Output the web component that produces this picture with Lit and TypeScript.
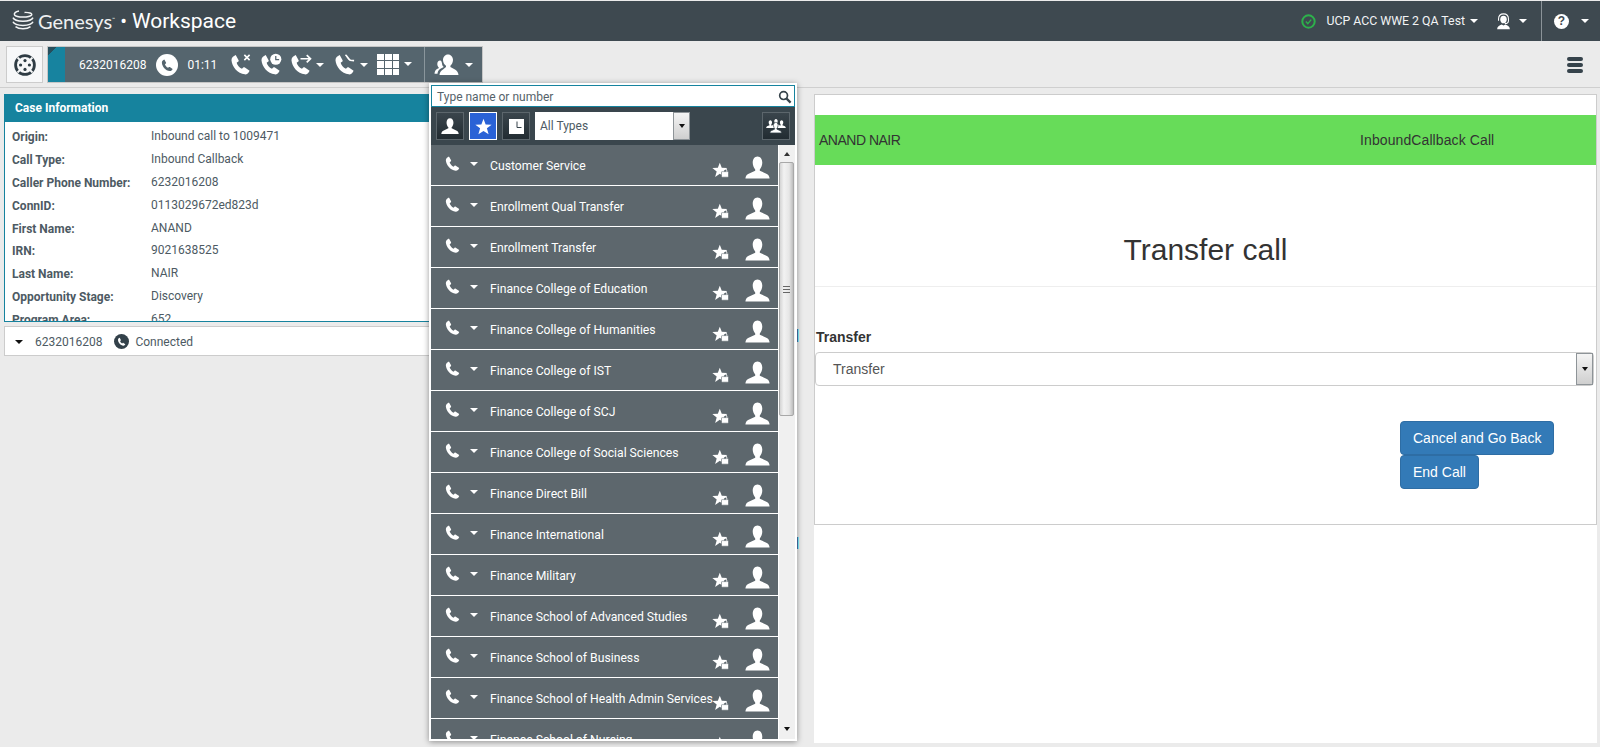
import { LitElement, css, html, svg } from "lit";
import { customElement } from "lit/decorators.js";

const HANDSET =
  "M7 2 L10 7.5 C10.3 8.2 10 8.8 9 9.5 L8 10.2 C8.6 12.6 10.8 15.4 13.5 16.5 L14.6 15.4 C15.3 14.8 16 14.8 16.6 15.2 L21.5 18.5 C20.5 21 18.5 22.5 16.5 22.3 C9 21.5 3 14 2.6 7.5 C2.5 5 4.5 3 7 2Z";
const PERSON =
  "M12 1.5 C14.9 1.5 16.6 4.2 16.6 7.5 C16.6 10.4 15.2 12.6 14.2 13.8 L14.2 15 L21 18.2 C22.6 19 23.4 20.6 23.6 22.6 L0.4 22.6 C0.6 20.6 1.4 19 3 18.2 L9.8 15 L9.8 13.8 C8.8 12.6 7.4 10.4 7.4 7.5 C7.4 4.2 9.1 1.5 12 1.5Z";
const STAR =
  "M12 1 L15 9 L23.5 9.4 L16.8 14.6 L19.2 23 L12 18.2 L4.8 23 L7.2 14.6 L0.5 9.4 L9 9Z";

const phone = (size: number, extra = svg``) => html`<svg
  class="ico"
  width=${size}
  height=${size}
  viewBox="0 0 24 24"
  fill="#fff"
>
  <path d=${HANDSET}></path>${extra}
</svg>`;

const person = (size: number) => html`<svg
  class="ico"
  width=${size}
  height=${size}
  viewBox="0 0 24 24"
  fill="#fff"
>
  <path d=${PERSON}></path>
</svg>`;

const phoneDisc = (size: number, bg: string, fg: string) => html`<svg
  class="ico"
  width=${size}
  height=${size}
  viewBox="0 0 24 24"
>
  <circle cx="12" cy="12" r="12" fill=${bg}></circle>
  <path d=${HANDSET} fill=${fg} transform="translate(4.8 4.8) scale(.62)"></path>
</svg>`;

const favLock = html`<svg class="ico" width="17" height="16" viewBox="0 0 17 16">
  <path d=${STAR} fill="#fff" transform="scale(.65)"></path>
  <rect x="9.5" y="9.6" width="7" height="5.6" rx=".6" fill="#fff" stroke="#5d676d" stroke-width=".6"></rect>
  <path d="M11.2 9.6 V8.6 a1.8 1.8 0 0 1 3.6 0 V9.6" fill="none" stroke="#fff" stroke-width="1"></path>
</svg>`;

const caret = (cls = "") => html`<i class="caret ${cls}"></i>`;

const CASE_ROWS = [
  ["Origin:", "Inbound call to 1009471"],
  ["Call Type:", "Inbound Callback"],
  ["Caller Phone Number:", "6232016208"],
  ["ConnID:", "0113029672ed823d"],
  ["First Name:", "ANAND"],
  ["IRN:", "9021638525"],
  ["Last Name:", "NAIR"],
  ["Opportunity Stage:", "Discovery"],
  ["Program Area:", "652"],
];

const TARGETS = [
  "Customer Service",
  "Enrollment Qual Transfer",
  "Enrollment Transfer",
  "Finance College of Education",
  "Finance College of Humanities",
  "Finance College of IST",
  "Finance College of SCJ",
  "Finance College of Social Sciences",
  "Finance Direct Bill",
  "Finance International",
  "Finance Military",
  "Finance School of Advanced Studies",
  "Finance School of Business",
  "Finance School of Health Admin Services",
  "Finance School of Nursing",
];

@customElement("app-root")
export class AppRoot extends LitElement {
  private _topbar() {
    return html`
      <header class="topbar">
        <svg class="logo" width="22" height="20" viewBox="0 0 22 20" fill="none" stroke="#f2f4f5" stroke-width="1.5">
          <path d="M7 1 C3.5 1.6 1.6 3.4 2.6 5 C4.5 7.8 17.5 7.8 19.6 5 C20.6 3.4 17 2.2 12.5 2.4"></path>
          <path d="M1 7.6 C3 12.4 19 12.4 21 7.6"></path>
          <path d="M1 11.8 C3 16.6 19 16.6 21 11.8"></path>
          <path d="M3.5 16.6 C7 19.4 15 19.4 18.5 16.6"></path>
        </svg>
        <span class="genesys">Genesys</span><sup class="tm">™</sup>
        <span class="bullet">•</span>
        <span class="workspace">Workspace</span>
        <span class="spring"></span>
        <svg class="ico" width="15" height="15" viewBox="0 0 15 15" fill="none">
          <circle cx="7.5" cy="7.5" r="6.2" stroke="#2db14b" stroke-width="2"></circle>
          <path d="M4.8 7.6 L6.8 9.6 L10.2 5.6" stroke="#2db14b" stroke-width="1.4"></path>
        </svg>
        <span class="user">UCP ACC WWE 2 QA Test</span>
        ${caret("user-caret")}
        <svg class="ico agent" width="17" height="17" viewBox="0 0 24 24" fill="#fff">
          <path d="M12 4 C15.2 4 16.6 6.4 16.6 9 C16.6 12 14.8 14.6 12 14.6 C9.2 14.6 7.4 12 7.4 9 C7.4 6.4 8.8 4 12 4Z"></path>
          <path d="M3 23 C3 19 6 17.5 9.5 16.2 L12 17.6 L14.5 16.2 C18 17.5 21 19 21 23Z"></path>
          <path d="M5 11 V8.5 C5 4 8 1.2 12 1.2 C16 1.2 19 4 19 8.5 V11 M19 11 C19 14 17 15 14 15" fill="none" stroke="#fff" stroke-width="1.5"></path>
        </svg>
        ${caret("agent-caret")}
        <span class="top-divider"></span>
        <span class="help">?</span>
        ${caret("help-caret")}
      </header>
    `;
  }

  private _toolbar() {
    return html`
      <div class="toolbar">
        <button class="dial">
          <svg width="24" height="24" viewBox="0 0 24 24" fill="none">
            <circle cx="12" cy="12" r="9.4" stroke="#2f3c44" stroke-width="2.8"></circle>
            <path d="M4.5 4.5 L8 8 M19.5 4.5 L16 8 M4.5 19.5 L8 16 M19.5 19.5 L16 16" stroke="#f7f8f9" stroke-width="1.8"></path>
            <circle cx="12" cy="7.6" r="1.6" fill="#2f3c44"></circle>
            <circle cx="12" cy="16.4" r="1.6" fill="#2f3c44"></circle>
            <circle cx="7.6" cy="12" r="1.6" fill="#2f3c44"></circle>
            <circle cx="16.4" cy="12" r="1.6" fill="#2f3c44"></circle>
          </svg>
        </button>
        <div class="callbar">
          <div class="stripe"></div>
          <span class="call-num">6232016208</span>
          ${phoneDisc(22, "#fff", "#55656e")}
          <span class="call-time">01:11</span>
          <span class="call-ico first">
            ${phone(23, svg`<path d="M16 2 L21.5 7.5 M21.5 2 L16 7.5" stroke="#fff" stroke-width="1.7"></path>`)}
          </span>
          <span class="call-ico">
            ${phone(23, svg`<circle cx="17.5" cy="6.5" r="5.8"></circle><path d="M17.5 3 V6.8 H21" fill="none" stroke="#55656e" stroke-width="1.3"></path>`)}
          </span>
          <span class="call-ico">
            ${phone(23, svg`<path d="M12 6 H22 M18.5 2.2 L22.4 6 L18.5 9.8" fill="none" stroke="#fff" stroke-width="1.8"></path>`)}
            ${caret("bar-caret")}
          </span>
          <span class="call-ico wide">
            ${phone(23, svg`<path d="M13 2 C15 3.4 15.5 6 18 7.6 L22 8" fill="none" stroke="#fff" stroke-width="1.8"></path>`)}
            ${caret("bar-caret")}
          </span>
          <span class="call-ico wide">
            <span class="grid-ico">${Array.from({ length: 9 }, () => html`<b></b>`)}</span>
            ${caret("bar-caret grid-caret")}
          </span>
          <span class="bar-divider"></span>
          <span class="agents">
            <svg class="ico" width="25" height="24" viewBox="0 0 25 24" fill="#fff">
              <path d="M14 1.5 C17 1.5 19 4 19 7 C19 9.6 17.6 11.6 16.4 12.8 L16.4 14 L21 16.4 C23 17.4 24.3 19.6 24.5 22 L5.5 22 C5.7 19.6 7 17.4 9 16.4 L12 14 L12 12.8 C10.4 11.6 9 9.6 9 7 C9 4 11 1.5 14 1.5Z"></path>
              <path d="M6 7.5 C7.5 7.5 7.8 9 8 10.5 C8.2 12 8.5 13 9.8 14 L6 16 C4.5 17 3.6 19 3.5 20.8 L.5 20.8 C.6 18.6 1.6 16.8 3 16 L5 15 C3.6 13.4 3 11.8 3.4 10 C3.7 8.5 4.6 7.5 6 7.5Z"></path>
            </svg>
            ${caret("bar-caret agents-caret")}
          </span>
        </div>
        <span class="spring"></span>
        <span class="burger"><b></b><b></b><b></b></span>
      </div>
    `;
  }

  private _casePanel() {
    return html`
      <section class="left">
        <div class="case">
          <div class="case-title">Case Information</div>
          <div class="case-body">
            ${CASE_ROWS.map(
              ([k, v]) => html`<div class="case-row"><span class="key">${k}</span><span>${v}</span></div>`
            )}
          </div>
        </div>
        <div class="party">
          <i class="caret dark"></i>
          <span class="party-num">6232016208</span>
          ${phoneDisc(15, "#33414a", "#fff")}
          <span class="party-state">Connected</span>
        </div>
      </section>
    `;
  }

  private _form() {
    return html`
      <section class="right">
        <div class="frame">
          <div class="banner">
            <span class="b-name">ANAND NAIR</span>
            <span class="b-type">InboundCallback Call</span>
          </div>
          <h2>Transfer call</h2>
          <hr />
          <label>Transfer</label>
          <div class="select">
            <span>Transfer</span>
            <span class="sel-btn"><i class="caret dark small"></i></span>
          </div>
          <div class="actions">
            <button class="btn">Cancel and Go Back</button>
            <button class="btn">End Call</button>
          </div>
        </div>
      </section>
    `;
  }

  private _popup() {
    return html`
      <div class="popup">
        <div class="search">
          <span>Type name or number</span>
          <svg width="14" height="14" viewBox="0 0 14 14" fill="none" stroke="#36434b">
            <circle cx="5.6" cy="5.6" r="3.9" stroke-width="1.7"></circle>
            <path d="M8.6 8.6 L12.6 12.6" stroke-width="2.2"></path>
          </svg>
        </div>
        <div class="filters">
          <span class="f-btn">${person(18)}</span>
          <span class="f-btn active">
            <svg width="17" height="17" viewBox="0 0 24 24" fill="#fff"><path d=${STAR}></path></svg>
          </span>
          <span class="f-btn">
            <svg width="15" height="15" viewBox="0 0 15 15">
              <rect width="15" height="15" fill="#fff"></rect>
              <path d="M8 2.5 V8.5 H12.5" fill="none" stroke="#36434b" stroke-width="1"></path>
            </svg>
          </span>
          <div class="type-select">
            <span>All Types</span>
            <span class="sel-btn"><i class="caret dark small"></i></span>
          </div>
          <span class="spring"></span>
          <span class="f-btn">
            <svg width="20" height="16" viewBox="0 0 32 24" fill="#fff">
              <g transform="translate(9 0) scale(.58)"><path d=${PERSON}></path></g>
              <g transform="translate(0 2) scale(.58)"><path d=${PERSON}></path></g>
              <g transform="translate(18 2) scale(.58)"><path d=${PERSON}></path></g>
              <g transform="translate(6 5) scale(.8)"><path d=${PERSON} stroke="#36434b" stroke-width="1.4"></path></g>
            </svg>
          </span>
        </div>
        <div class="list">
          <div class="rows">
            ${TARGETS.map(
              (t) => html`
                <div class="row">
                  ${phone(17)} ${caret("row-caret")}
                  <span class="row-name">${t}</span>
                  <span class="row-fav">${favLock}</span>
                  <span class="row-person">${person(25)}</span>
                </div>
              `
            )}
          </div>
          <div class="scroll">
            <i class="caret dark small up"></i>
            <div class="thumb"><em></em></div>
            <span class="spring"></span>
            <i class="caret dark small"></i>
          </div>
        </div>
      </div>
    `;
  }

  render() {
    return html`
      ${this._topbar()} ${this._toolbar()}
      <main>${this._casePanel()} ${this._form()}</main>
      ${this._popup()}
      <i class="grip one"></i>
      <i class="grip two"></i>
    `;
  }

  static styles = css`
    :host {
      display: block;
      position: relative;
      width: 1600px;
      height: 747px;
      overflow: hidden;
      background: #ebebeb;
      font-family: Roboto, sans-serif;
      font-size: 12px;
      color: #4d5a63;
    }
    .spring {
      flex: 1;
    }
    .ico {
      display: block;
      flex: none;
    }
    .caret {
      display: block;
      flex: none;
      width: 0;
      height: 0;
      border: 4px solid transparent;
      border-top: 4px solid #fff;
      border-bottom: 0;
    }
    .caret.dark {
      border-top-color: #111;
    }
    .caret.small {
      border-width: 4px 3.5px 0;
    }
    .caret.up {
      border-width: 0 3.5px 4px;
      border-bottom: 4px solid #333;
      border-top: 0;
    }
    .grip {
      position: absolute;
      left: 797px;
      width: 2px;
      background: linear-gradient(90deg, #3d5f8f 50%, #6fd3e0 50%);
    }
    .grip.one {
      top: 329px;
      height: 13px;
    }
    .grip.two {
      top: 537px;
      height: 12px;
    }

    .topbar {
      box-sizing: border-box;
      height: 40px;
      margin-top: 1px;
      display: flex;
      align-items: center;
      background: #3e4950;
      color: #fff;
    }
    .logo {
      flex: none;
      margin-left: 12px;
      margin-top: -2px;
    }
    .genesys {
      margin-left: 4px;
      font: 20px Lato, sans-serif;
      color: #eef0f1;
    }
    .tm {
      font-size: 5px;
      align-self: center;
      margin: -4px 0 0 0;
    }
    .bullet {
      margin-left: 5px;
      font-size: 20px;
    }
    .workspace {
      margin-left: 5px;
      font-size: 21px;
    }
    .user {
      margin-left: 10px;
      font-size: 12.3px;
      color: #f2f4f5;
    }
    .user-caret {
      margin-left: 5px;
    }
    .agent {
      margin-left: 17px;
    }
    .agent-caret {
      margin-left: 7px;
    }
    .top-divider {
      width: 1px;
      align-self: stretch;
      background: #8b9398;
      margin-left: 14px;
    }
    .help {
      margin-left: 12px;
      width: 15px;
      height: 15px;
      border-radius: 50%;
      background: #fff;
      color: #3e4950;
      font: 700 12px/15px "Liberation Sans", sans-serif;
      text-align: center;
    }
    .help-caret {
      margin-left: 12px;
      margin-right: 11px;
    }

    .toolbar {
      box-sizing: border-box;
      height: 47px;
      padding: 5px 17px 4px 6px;
      display: flex;
      align-items: flex-start;
      border-bottom: 1px solid #cfcfcf;
    }
    .dial {
      box-sizing: border-box;
      width: 37px;
      height: 37px;
      padding: 0;
      display: flex;
      align-items: center;
      justify-content: center;
      background: #f7f8f9;
      border: 1px solid #ccc;
    }
    .callbar {
      box-sizing: border-box;
      margin-left: 4px;
      width: 436px;
      height: 37px;
      display: flex;
      align-items: center;
      background: #55656e;
      border: 1px solid #c6c6c6;
      color: #fff;
    }
    .stripe {
      width: 17px;
      align-self: stretch;
      background: linear-gradient(135deg, #274e5c 0 6px, #17839f 6px);
    }
    .call-num {
      margin-left: 14px;
      font-size: 12px;
    }
    .callbar > .ico {
      margin-left: 10px;
    }
    .call-time {
      margin-left: 9px;
      font-size: 12px;
    }
    .call-ico {
      display: flex;
      align-items: center;
      margin-left: 7px;
    }
    .call-ico.first {
      margin-left: 12px;
    }
    .call-ico.wide {
      margin-left: 9px;
    }
    .bar-caret {
      margin-left: 4px;
    }
    .grid-caret {
      margin-left: 5px;
    }
    .agents-caret {
      margin-left: 6px;
    }
    .grid-ico {
      display: grid;
      grid-template-columns: repeat(3, 6.4px);
      grid-auto-rows: 6.4px;
      gap: 1.4px;
    }
    .grid-ico b {
      background: #fff;
    }
    .bar-divider {
      width: 1px;
      align-self: stretch;
      margin-left: 12px;
      background: #8a969c;
    }
    .agents {
      display: flex;
      align-items: center;
      margin-left: 9px;
    }
    .burger {
      display: grid;
      gap: 2px;
      width: 16px;
      align-self: center;
    }
    .burger b {
      height: 4px;
      border-radius: 2px;
      background: #36434b;
    }

    main {
      box-sizing: border-box;
      display: flex;
      height: 655px;
      padding-top: 6px;
    }
    .left {
      width: 792px;
      margin-left: 4px;
    }
    .case {
      box-sizing: border-box;
      height: 228px;
      overflow: hidden;
      background: #fff;
      border: 1px solid #16839e;
      border-top: 0;
    }
    .case-title {
      height: 28px;
      margin: 0 -1px;
      padding-left: 11px;
      background: #16839e;
      color: #fff;
      font-weight: 700;
      line-height: 28px;
    }
    .case-body {
      padding: 3px 7px;
    }
    .case-row {
      display: grid;
      grid-template-columns: 139px 1fr;
      height: 22.9px;
      line-height: 22px;
    }
    .key {
      font-weight: 700;
      padding-top: 1px;
    }
    .party {
      box-sizing: border-box;
      height: 30px;
      margin-top: 4px;
      display: flex;
      align-items: center;
      padding: 1px 0 0 10px;
      background: #fff;
      border: 1px solid #ccc;
    }
    .party-num {
      margin-left: 12px;
    }
    .party .ico {
      margin-left: 12px;
    }
    .party-state {
      margin-left: 6px;
    }

    .right {
      box-sizing: border-box;
      width: 783px;
      margin-left: 18px;
      background: #fff;
      font-family: "Liberation Sans", sans-serif;
      font-size: 14px;
      color: #333;
    }
    .frame {
      box-sizing: border-box;
      height: 431px;
      border: 1px solid #ccc;
      padding-top: 20px;
    }
    .banner {
      display: flex;
      height: 50px;
      align-items: center;
      background: #67dc59;
      padding-left: 4px;
    }
    .b-name {
      width: 541px;
      letter-spacing: -0.5px;
    }
    .b-type {
      letter-spacing: 0.1px;
    }
    h2 {
      margin: 66px 0 0;
      height: 38px;
      font-size: 30px;
      font-weight: 400;
      line-height: 38px;
      text-align: center;
    }
    hr {
      margin: 17px 0 0;
      border: 0;
      border-top: 1px solid #eee;
    }
    label {
      display: block;
      margin: 40px 0 0 1px;
      height: 20px;
      font-weight: 700;
      line-height: 20px;
    }
    .select {
      box-sizing: border-box;
      height: 34px;
      margin: 5px 2px 0 0;
      padding-left: 17px;
      display: flex;
      align-items: center;
      justify-content: space-between;
      border: 1px solid #ccc;
      border-radius: 4px;
      color: #555;
    }
    .sel-btn {
      box-sizing: border-box;
      width: 17px;
      align-self: stretch;
      display: flex;
      align-items: center;
      justify-content: center;
      border: 1px solid #8e9498;
      background: linear-gradient(#f4f4f4, #cfcfcf);
    }
    .actions {
      margin: 35px 0 0 585px;
      display: flex;
      flex-direction: column;
      align-items: flex-start;
    }
    .btn {
      box-sizing: border-box;
      height: 34px;
      padding: 0 12px;
      font: 14px "Liberation Sans", sans-serif;
      color: #fff;
      background: #337ab7;
      border: 1px solid #2e6da4;
      border-radius: 4px;
    }

    .popup {
      position: absolute;
      left: 429px;
      top: 83px;
      box-sizing: border-box;
      width: 368px;
      height: 658px;
      padding: 2px;
      background: #fff;
      box-shadow: 0 1px 6px rgba(0, 0, 0, 0.4);
      display: flex;
      flex-direction: column;
      overflow: hidden;
    }
    .search {
      box-sizing: border-box;
      height: 22px;
      flex: none;
      display: flex;
      align-items: center;
      justify-content: space-between;
      padding: 1px 2px 0 5px;
      border: 1px solid #16839e;
      font-size: 12px;
      color: #55626a;
    }
    .filters {
      box-sizing: border-box;
      height: 38px;
      flex: none;
      display: flex;
      align-items: center;
      padding: 0 5px;
      gap: 5px;
      background: #3a464d;
    }
    .f-btn {
      box-sizing: border-box;
      width: 28px;
      height: 28px;
      display: flex;
      align-items: center;
      justify-content: center;
      border: 1px solid #5c666c;
      background: linear-gradient(#3a454c, #222c32);
    }
    .f-btn.active {
      background: #2a62d6;
      border-color: #fff;
    }
    .type-select {
      box-sizing: border-box;
      width: 155px;
      height: 28px;
      display: flex;
      align-items: center;
      justify-content: space-between;
      padding-left: 5px;
      background: #fff;
      font-size: 12px;
      color: #4d5a63;
    }
    .list {
      flex: 1;
      min-height: 0;
      display: flex;
    }
    .rows {
      flex: 1;
      min-width: 0;
      overflow: hidden;
    }
    .row {
      box-sizing: border-box;
      height: 41px;
      display: flex;
      align-items: flex-start;
      padding-top: 11px;
      background: #5d676d;
      border-bottom: 1px solid #fff;
      color: #fff;
    }
    .row > .ico {
      margin-left: 13px;
      margin-top: -1px;
    }
    .row-caret {
      margin: 6px 0 0 9px !important;
    }
    .row-name {
      position: absolute;
      margin-left: 59px;
      font-size: 12.2px;
      line-height: 20px;
      white-space: nowrap;
    }
    .row-fav {
      margin-left: auto;
      margin-top: 6px;
    }
    .row-person {
      margin: -1px 8px 0 16px;
    }
    .scroll {
      box-sizing: border-box;
      width: 16px;
      margin-left: 1px;
      padding: 7px 1px 8px 0;
      display: flex;
      flex-direction: column;
      align-items: center;
      background: #f0f0f0;
    }
    .thumb {
      box-sizing: border-box;
      width: 15px;
      height: 254px;
      margin-top: 6px;
      display: flex;
      align-items: center;
      justify-content: center;
      background: linear-gradient(90deg, #d4d4d4, #f2f2f2 30%, #e6e6e6 70%, #bdbdbd);
      border: 1px solid #a8a8a8;
      border-radius: 2px;
    }
    .thumb em {
      width: 7px;
      height: 7px;
      background: repeating-linear-gradient(#666 0 1px, transparent 1px 3px);
    }
  `;
}
